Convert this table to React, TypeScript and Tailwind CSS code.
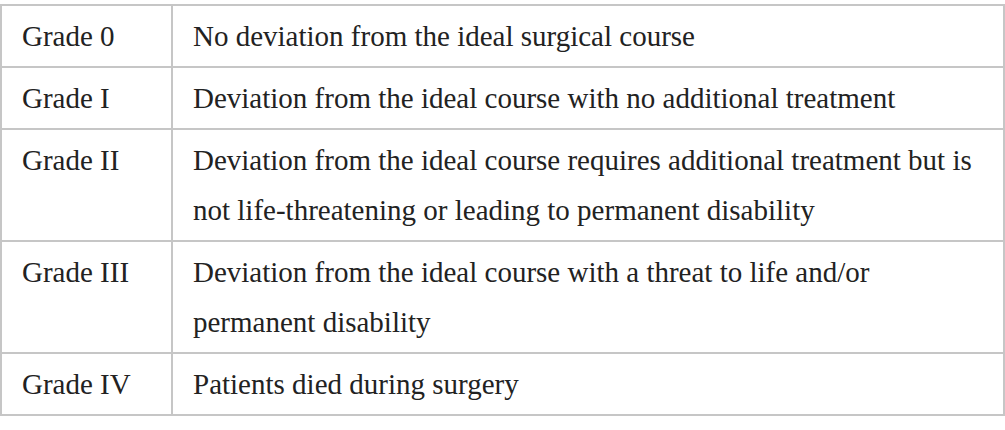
const rows: { grade: string; lines: string[] }[] = [
  { grade: "Grade 0", lines: ["No deviation from the ideal surgical course"] },
  { grade: "Grade I", lines: ["Deviation from the ideal course with no additional treatment"] },
  {
    grade: "Grade II",
    lines: [
      "Deviation from the ideal course requires additional treatment but is",
      "not life-threatening or leading to permanent disability",
    ],
  },
  {
    grade: "Grade III",
    lines: ["Deviation from the ideal course with a threat to life and/or", "permanent disability"],
  },
  { grade: "Grade IV", lines: ["Patients died during surgery"] },
];

export default function App() {
  return (
    <div className="[font-family:'Liberation_Serif',serif]">
      <div className="w-[1005px] h-[430px] bg-white pt-[4px] text-[29px] leading-[50px] text-[#222]">
        <div className="grid grid-cols-[171px_1fr] border-t-2 border-l-2 border-[#c6c6c6]">
          {rows.map((row) => (
            <div key={row.grade} className="contents">
              <div className="border-r-2 border-b-2 border-[#c6c6c6] pl-5 py-[5px]">{row.grade}</div>
              <div className="border-r-2 border-b-2 border-[#c6c6c6] pl-5 py-[5px] whitespace-nowrap">
                {row.lines.map((l) => (
                  <div key={l}>{l}</div>
                ))}
              </div>
            </div>
          ))}
        </div>
      </div>
    </div>
  );
}
